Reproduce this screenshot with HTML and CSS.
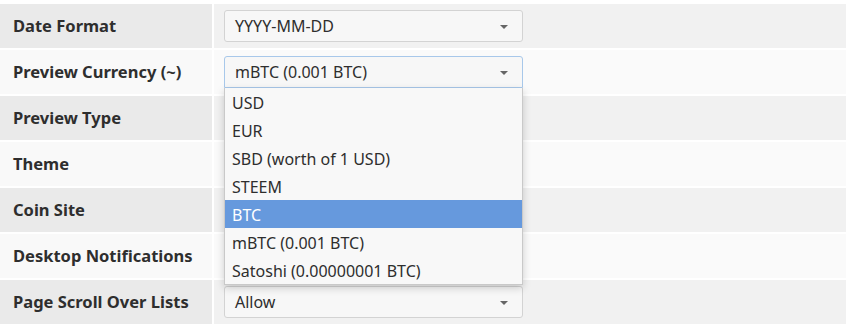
FILE: index.html
```html
<!DOCTYPE html>
<html>
<head>
<meta charset="utf-8">
<link rel="stylesheet" href="styles.css">
</head>
<body>
<div class="table">
  <div class="row odd"><div class="label">Date Format</div><div class="value"><div class="select">YYYY-MM-DD<span class="arrow"></span></div></div></div>
  <div class="row even"><div class="label">Preview Currency (~)</div><div class="value"><div class="select focus">mBTC (0.001 BTC)<span class="arrow"></span>
    <ul class="menu">
      <li>USD</li>
      <li>EUR</li>
      <li>SBD (worth of 1 USD)</li>
      <li>STEEM</li>
      <li class="sel">BTC</li>
      <li>mBTC (0.001 BTC)</li>
      <li>Satoshi (0.00000001 BTC)</li>
    </ul></div></div></div>
  <div class="row odd"><div class="label">Preview Type</div><div class="value"></div></div>
  <div class="row even"><div class="label">Theme</div><div class="value"></div></div>
  <div class="row odd"><div class="label">Coin Site</div><div class="value"></div></div>
  <div class="row even"><div class="label">Desktop Notifications</div><div class="value"></div></div>
  <div class="row odd"><div class="label">Page Scroll Over Lists</div><div class="value"><div class="select">Allow<span class="arrow"></span></div></div></div>
</div>
</body>
</html>
```
FILE: styles.css
```css
html, body { margin: 0; padding: 0; background: #fff; }
body { font-family: "Noto Sans", "Open Sans", sans-serif; color: #2e2e2e; width: 848px; height: 326px; overflow: hidden; }
.table { display: flex; flex-direction: column; gap: 2px; padding: 4px 2px 0 0; }
.row { display: flex; gap: 2px; height: 44px; }
.label { box-sizing: border-box; width: 212px; padding: 0 0 2px 13px; flex: none; display: flex; align-items: center; font-weight: bold; font-size: 16.5px; }
.value { flex: 1; padding-left: 10px; display: flex; align-items: center; }
.odd .label { background: #eaeaea; }
.odd .value { background: #f1f1f1; }
.even .label { background: #f9f9f9; }
.even .value { background: #fafafa; }
.select { position: relative; box-sizing: border-box; width: 299px; height: 32px; border: 1px solid #d3d3d3; border-radius: 3px; background: #f7f7f7; font-size: 16px; padding-left: 10px; display: flex; align-items: center; }
.select.focus { border-color: #a8c8ea; border-radius: 3px 3px 0 0; }
.arrow { position: absolute; right: 14px; top: 14px; width: 0; height: 0; border-left: 4px solid transparent; border-right: 4px solid transparent; border-top: 4px solid #666; }
.menu { position: absolute; left: -1px; top: 31px; width: 299px; box-sizing: border-box; margin: 0; padding: 0; list-style: none; background: #f8f8f8; border: 1px solid #c9c9c9; border-top: none; box-shadow: 0 3px 8px rgba(0,0,0,0.18); z-index: 2; }
.menu li { box-sizing: border-box; height: 28px; padding: 2px 0 0 7px; line-height: 26px; font-size: 16px; color: #2e2e2e; }
.menu li.sel { background: #6699dd; color: #fff; }
```
